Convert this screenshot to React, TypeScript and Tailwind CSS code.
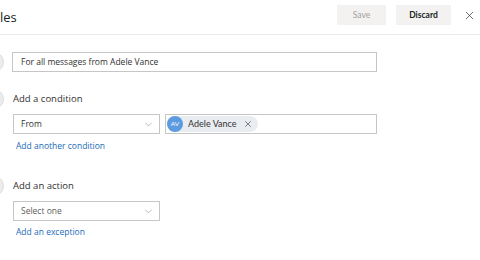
import { X, ChevronDown } from "lucide-react";

function StepDot() {
  return <div className="-ml-[16px] h-[20px] w-[20px] shrink-0 rounded-full border border-[#dcdcdc] bg-[#ececec]" />;
}

function Dropdown({ label, muted }: { label: string; muted?: boolean }) {
  return (
    <div className="flex h-[20px] w-[147px] items-center justify-between border border-[#c8c6c4] pl-[7px] pr-[5px]">
      <span className={`text-[8.5px] ${muted ? "text-[#605e5c]" : "text-[#323130]"}`}>{label}</span>
      <ChevronDown className="h-[11px] w-[11px] text-[#8a8886]" strokeWidth={1.3} />
    </div>
  );
}

export default function App() {
  return (
    <div className="h-[260px] w-[480px] overflow-hidden bg-white font-['Open_Sans','Noto_Sans',sans-serif] text-[#323130]">
      {/* header */}
      <div className="flex h-[35px] items-start border-b border-[#edebe9]">
        <h1 className="mt-[7px] text-[13px] leading-[20px] text-[#201f1e]">les</h1>
        <div className="ml-auto mr-[4px] mt-[5px] flex items-center font-['Lato',sans-serif]">
          <button className="h-[20px] w-[49px] bg-[#f3f2f1] text-[8.5px] text-[#a19f9d]">Save</button>
          <button className="ml-[10px] h-[20px] w-[55px] bg-[#f3f2f1] text-[8.5px] font-bold text-[#201f1e]">Discard</button>
          <X className="ml-[12px] h-[13px] w-[13px] text-[#323130]" strokeWidth={1.3} />
        </div>
      </div>

      {/* name */}
      <div className="mt-[17px] flex items-center">
        <StepDot />
        <div className="ml-[8px] flex h-[20px] w-[365px] items-center border border-[#c8c6c4] pl-[8px] text-[8.5px]">
          For all messages from Adele Vance
        </div>
      </div>

      {/* condition */}
      <div className="mt-[17px] flex h-[20px] items-center">
        <StepDot />
        <span className="ml-[9px] text-[9.5px]">Add a condition</span>
      </div>
      <div className="ml-[13px] mt-[5px] flex gap-[5px]">
        <Dropdown label="From" />
        <div className="flex h-[20px] w-[212px] items-center border border-[#c8c6c4] pl-[1px]">
          <div className="flex h-[16px] items-center rounded-full bg-[#e9edf2] pr-[5px] font-['Lato',sans-serif]">
            <div className="flex h-[16px] w-[16px] items-center justify-center rounded-full bg-[#5d9be0] text-[6.5px] text-white">AV</div>
            <span className="ml-[5px] text-[9px] text-[#323130]">Adele Vance</span>
            <X className="ml-[6px] h-[10px] w-[10px] text-[#323130]" strokeWidth={1.4} />
          </div>
        </div>
      </div>
      <div className="ml-[16px] mt-[5px] text-[8.5px] leading-[14px] text-[#1a6bb8]">Add another condition</div>

      {/* action */}
      <div className="mt-[23px] flex h-[20px] items-center">
        <StepDot />
        <span className="ml-[9px] text-[9.5px]">Add an action</span>
      </div>
      <div className="ml-[13px] mt-[5px]">
        <Dropdown label="Select one" muted />
      </div>
      <div className="ml-[16px] mt-[4px] text-[8.5px] leading-[14px] text-[#1a6bb8]">Add an exception</div>
    </div>
  );
}
